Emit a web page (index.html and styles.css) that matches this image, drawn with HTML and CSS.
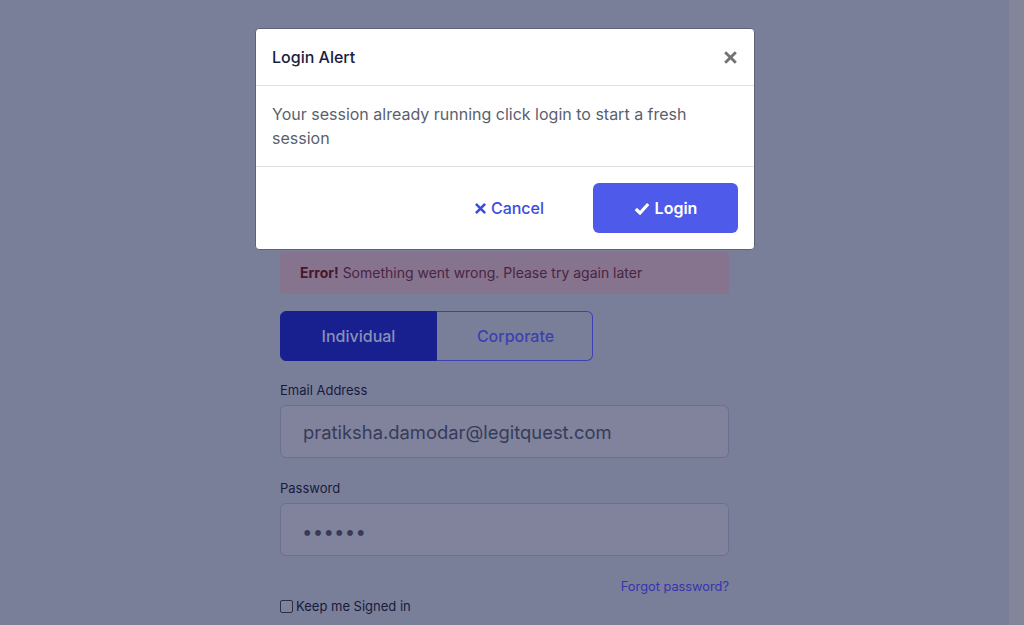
FILE: index.html
```html
<!DOCTYPE html>
<html lang="en">
<head>
<meta charset="utf-8">
<title>Login</title>
<link rel="stylesheet" href="styles.css">
</head>
<body>
<div class="page">
  <main class="main">
    <div class="form">
      <div class="alert"><strong>Error!</strong> Something went wrong. Please try again later</div>
      <div class="tabs">
        <button class="tab tab-active">Individual</button>
        <button class="tab">Corporate</button>
      </div>
      <div class="field">
        <label class="label">Email Address</label>
        <div class="input">pratiksha.damodar@legitquest.com</div>
      </div>
      <div class="field field-pass">
        <label class="label">Password</label>
        <div class="input input-pass">&#8226;&#8226;&#8226;&#8226;&#8226;&#8226;</div>
      </div>
      <div class="forgot-row"><a class="forgot">Forgot password?</a></div>
      <label class="remember"><span class="checkbox"></span>Keep me Signed in</label>
    </div>

    <div class="modal">
      <div class="modal-header">
        <h5 class="modal-title">Login Alert</h5>
        <span class="close">
          <svg width="13" height="13" viewBox="0 0 12 12"><path d="M2 2 L10 10 M10 2 L2 10" stroke="#727272" stroke-width="2.6" stroke-linecap="square"/></svg>
        </span>
      </div>
      <div class="modal-body">Your session already running click login to start a fresh session</div>
      <div class="modal-footer">
        <button class="btn btn-cancel">
          <svg width="11" height="11" viewBox="0 0 12 12"><path d="M2 2 L10 10 M10 2 L2 10" stroke="currentColor" stroke-width="2.8" stroke-linecap="square"/></svg>
          Cancel
        </button>
        <button class="btn btn-login">
          <svg width="16" height="13" viewBox="0 0 16 13"><path d="M1.8 7 L6 11 L14.2 2" fill="none" stroke="#fff" stroke-width="3.2" stroke-linejoin="miter"/></svg>
          Login
        </button>
      </div>
    </div>
  </main>
  <div class="strip"></div>
</div>
</body>
</html>
```

FILE: styles.css
```css
* { box-sizing: border-box; }
html, body { margin: 0; padding: 0; }
body {
  font-family: Inter, "Noto Sans", "Liberation Sans", sans-serif;
  background: #7a7f99;
  width: 1024px;
  height: 625px;
  overflow: hidden;
}
.page {
  display: flex;
  height: 625px;
}
.main {
  position: relative;
  flex: 1;
  display: flex;
  justify-content: center;
}
.strip {
  width: 15px;
  background: #838599;
}
.form {
  width: 449px;
  padding-top: 252px;
}
.alert {
  background: #86738d;
  color: #4b2443;
  font-size: 14px;
  line-height: 20px;
  padding: 11px 20px 11px 20px;
  border-radius: 4px;
}
.alert strong { color: #47162f; font-weight: 700; }
.tabs {
  display: flex;
  margin-top: 17px;
  width: 313px;
}
.tab {
  flex: 1;
  height: 50px;
  font-family: inherit;
  font-size: 16px;
  font-weight: 500;
  background: transparent;
  border: 1px solid #3a41b5;
  color: #3a41b2;
  padding: 0;
}
.tab-active {
  background: #182090;
  border-color: #182090;
  color: #8a90b4;
  border-radius: 6px 0 0 6px;
  flex: 0 0 157px;
}
.tab:last-child {
  border-left: 0;
  border-radius: 0 6px 6px 0;
  padding-left: 2px;
}
.field { margin-top: 21px; }
.field-pass { margin-top: 22px; }
.label {
  display: block;
  font-size: 13px;
  line-height: 16px;
  color: #171b3c;
  margin-bottom: 7px;
}
.input {
  height: 53px;
  border: 1px solid #6b708d;
  border-radius: 6px;
  background: #80839b;
  color: #363b5a;
  font-size: 18.4px;
  padding: 0 22px;
  display: flex;
  align-items: center;
}
.input-pass {
  font-size: 18.5px;
  letter-spacing: 0.3px;
  padding-left: 21px;
  padding-top: 2px;
}
.forgot-row {
  display: flex;
  justify-content: flex-end;
  margin-top: 23px;
}
.forgot {
  font-size: 12.8px;
  line-height: 16px;
  color: #3434ae;
}
.remember {
  display: flex;
  align-items: center;
  font-size: 13px;
  line-height: 16px;
  color: #161a3c;
  margin-top: 3px;
}
.checkbox {
  width: 13px;
  height: 13px;
  border: 1px solid #2c2f45;
  border-radius: 2px;
  margin-right: 3px;
  background: #7f8298;
}
.modal {
  position: absolute;
  top: 28px;
  left: 255px;
  width: 500px;
  background: #fff;
  border: 1px solid #5f6378;
  border-radius: 4px;
}
.modal-header {
  display: flex;
  align-items: center;
  justify-content: space-between;
  padding: 16px 16px 16px 16px;
  border-bottom: 1px solid #dee2e6;
}
.modal-title {
  margin: 0;
  font-size: 16px;
  line-height: 24px;
  font-weight: 500;
  color: #19213f;
}
.close { display: flex; margin-right: 1px; }
.modal-body {
  padding: 16px 40px 16px 16px;
  font-size: 16px;
  line-height: 24px;
  color: #5a5f6f;
}
.modal-footer {
  display: flex;
  justify-content: flex-end;
  align-items: center;
  gap: 25px;
  padding: 16px 16px 16px;
  border-top: 1px solid #dee2e6;
}
.btn {
  height: 50px;
  border: 0;
  font-family: inherit;
  font-size: 16px;
  display: flex;
  align-items: center;
  justify-content: center;
  gap: 5px;
  border-radius: 6px;
  cursor: pointer;
}
.btn-cancel {
  background: transparent;
  color: #3a4cdf;
  font-weight: 500;
  padding: 0 24px;
}
.btn-login {
  width: 145px;
  background: #4e5ae9;
  color: #fff;
  font-weight: 600;
}
```
